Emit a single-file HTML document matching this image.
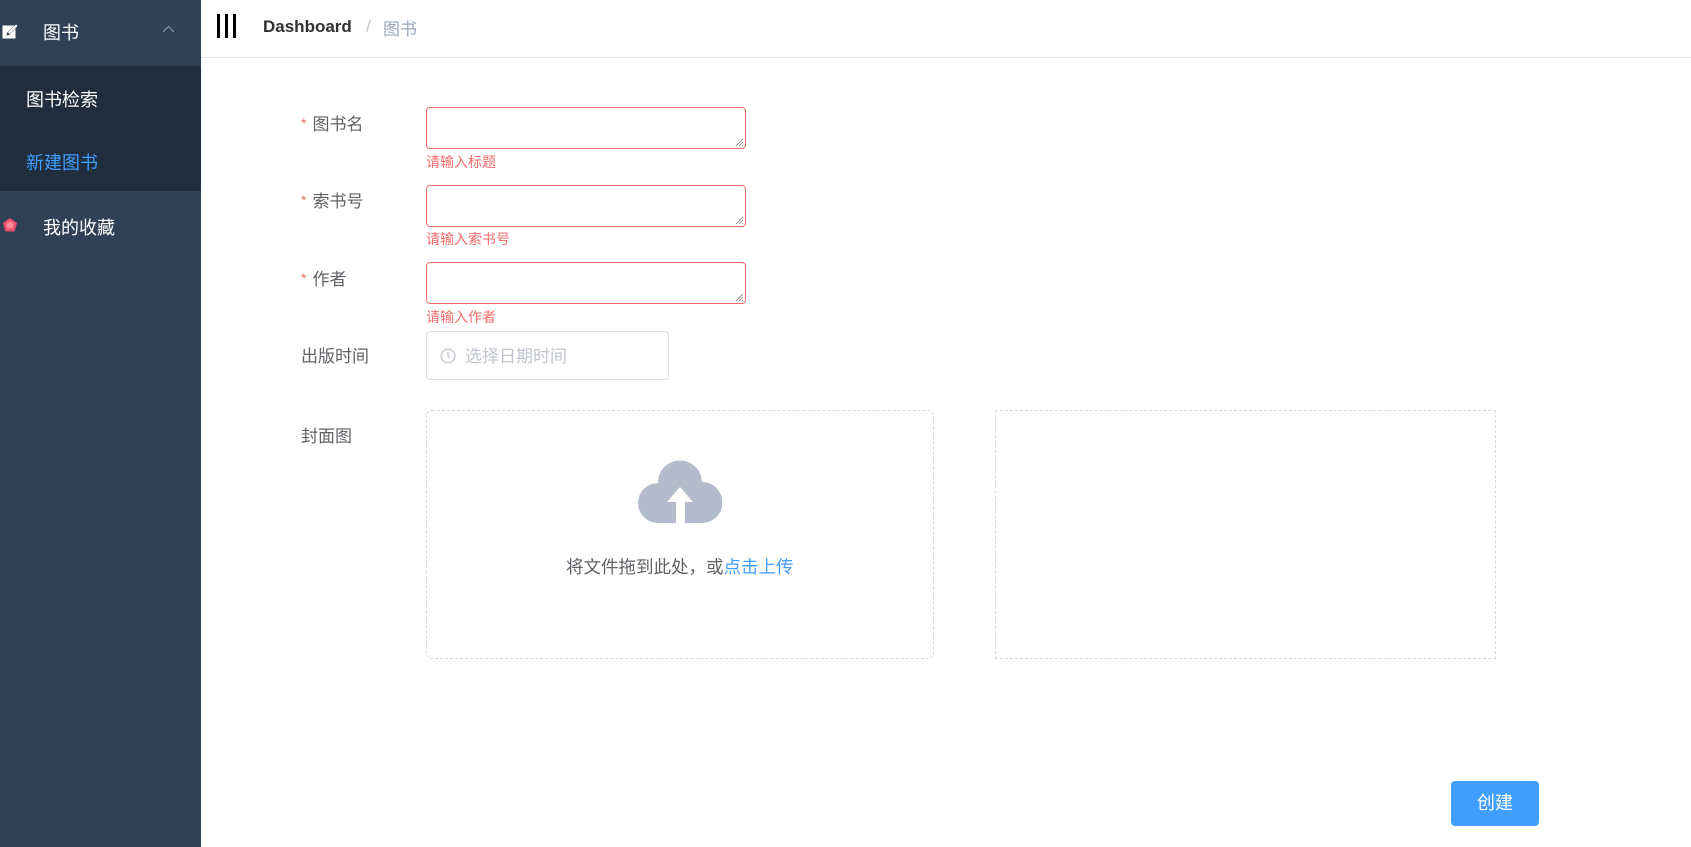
<!DOCTYPE html>
<html><head><meta charset="utf-8">
<style>
*{margin:0;padding:0;box-sizing:border-box}
body{width:1691px;height:847px;overflow:hidden;background:#fff;font-family:"Liberation Sans","Noto Sans CJK SC",sans-serif;position:relative}
.side{position:absolute;left:0;top:0;width:201px;height:847px;background:#304156}
.sub{position:absolute;left:0;top:66px;width:201px;height:125px;background:#1f2d3d}
.abs{position:absolute;white-space:nowrap}
.hdr{position:absolute;left:201px;top:0;right:0;height:58px;border-bottom:1px solid #e6e6e6}
.lbl{position:absolute;left:301px;font-size:17px;color:#606266}
.lbl i{font-style:normal;color:#f56c6c;font-size:14px;margin-right:6px;vertical-align:2px}
.ta{position:absolute;left:426px;width:320px;height:42px;border:1px solid #f56c6c;border-radius:4px}
.ta svg{position:absolute;right:1px;bottom:1px}
.err{position:absolute;left:426px;font-size:14px;color:#f56c6c}
.dash{position:absolute;border:1px dashed #d9d9d9;border-radius:6px}
</style></head><body>
<div class="side"></div>
<div class="sub"></div>
<svg class="abs" style="left:2px;top:23px" width="17" height="16" viewBox="0 0 17 16"><rect x="0.5" y="2.5" width="13" height="13" fill="#fff"/><path d="M5 10 L14 1 L16 3 L7 12 L4.5 12.5Z" fill="#304156"/><path d="M6 9.5 L14 1.5 L15.5 3 L7.5 11Z" fill="#fff"/></svg>
<div class="abs" style="left:43px;top:19px;font-size:18px;color:#fff">图书</div>
<svg class="abs" style="left:162px;top:25px" width="13" height="8" viewBox="0 0 13 8"><path d="M1 7 L6.5 1.5 L12 7" stroke="#8b95a5" stroke-width="1.2" fill="none"/></svg>
<div class="abs" style="left:26px;top:86px;font-size:18px;color:#fff">图书检索</div>
<div class="abs" style="left:26px;top:149px;font-size:18px;color:#409eff">新建图书</div>
<svg class="abs" style="left:2px;top:217px" width="16" height="16" viewBox="0 0 16 16"><path d="M8 1 L15 6 L12.5 14.5 L3.5 14.5 L1 6Z" fill="#f0506e"/><path d="M8 4 L12 7 L10.5 11.5 L5.5 11.5 L4 7Z" fill="#ff8a9c"/></svg>
<div class="abs" style="left:43px;top:214px;font-size:18px;color:#fff">我的收藏</div>

<div class="hdr"></div>
<div class="abs" style="left:217px;top:14px;width:3px;height:24px;background:#000"></div>
<div class="abs" style="left:225px;top:14px;width:3px;height:24px;background:#000"></div>
<div class="abs" style="left:233px;top:14px;width:3px;height:24px;background:#000"></div>
<div class="abs" style="left:263px;top:17px;font-size:17px;font-weight:bold;color:#303133">Dashboard</div>
<div class="abs" style="left:366px;top:17px;font-size:17px;color:#c0c4cc">/</div>
<div class="abs" style="left:383px;top:15px;font-size:17px;color:#97a8be">图书</div>

<div class="lbl" style="top:110px"><i>*</i>图书名</div>
<div class="ta" style="top:107px"><svg width="10" height="10" viewBox="0 0 10 10"><path d="M9 2L2 9M9 5L5 9M9 8L8 9" stroke="#777" stroke-width="0.8"/></svg></div>
<div class="err" style="top:152px">请输入标题</div>
<div class="lbl" style="top:187px"><i>*</i>索书号</div>
<div class="ta" style="top:185px"><svg width="10" height="10" viewBox="0 0 10 10"><path d="M9 2L2 9M9 5L5 9M9 8L8 9" stroke="#777" stroke-width="0.8"/></svg></div>
<div class="err" style="top:229px">请输入索书号</div>
<div class="lbl" style="top:265px"><i>*</i>作者</div>
<div class="ta" style="top:262px"><svg width="10" height="10" viewBox="0 0 10 10"><path d="M9 2L2 9M9 5L5 9M9 8L8 9" stroke="#777" stroke-width="0.8"/></svg></div>
<div class="err" style="top:307px">请输入作者</div>
<div class="lbl" style="top:342px">出版时间</div>
<div class="abs" style="left:426px;top:331px;width:243px;height:49px;border:1px solid #dcdfe6;border-radius:4px"></div>
<svg class="abs" style="left:440px;top:348px" width="16" height="16" viewBox="0 0 16 16"><circle cx="8" cy="8" r="6.8" stroke="#c0c4cc" stroke-width="1.3" fill="none"/><path d="M8 4 V8.5 L10.5 10" stroke="#c0c4cc" stroke-width="1.3" fill="none"/></svg>
<div class="abs" style="left:465px;top:342px;font-size:17px;color:#c0c4cc">选择日期时间</div>

<div class="lbl" style="top:422px">封面图</div>
<div class="dash" style="left:426px;top:410px;width:508px;height:249px"></div>
<div class="dash" style="left:995px;top:410px;width:501px;height:249px;border-radius:0"></div>
<svg class="abs" style="left:638px;top:460px" width="84" height="63" viewBox="0 0 84 63"><path d="M20 63 A20 20 0 0 1 20 23 A22 22 0 0 1 64 22 A20.5 20.5 0 0 1 64 63Z" fill="#b4bccc"/><path d="M42 27 L55 42 L47 42 L47 63 L38 63 L38 42 L29 42Z" fill="#fff"/></svg>
<div class="abs" style="left:566px;top:554px;font-size:17.5px;color:#606266">将文件拖到此处，或<span style="color:#409eff">点击上传</span></div>

<div class="abs" style="left:1451px;top:781px;width:88px;height:45px;background:#409eff;border-radius:4px;color:#fff;font-size:18px;text-align:center;line-height:45px">创建</div>
</body></html>
